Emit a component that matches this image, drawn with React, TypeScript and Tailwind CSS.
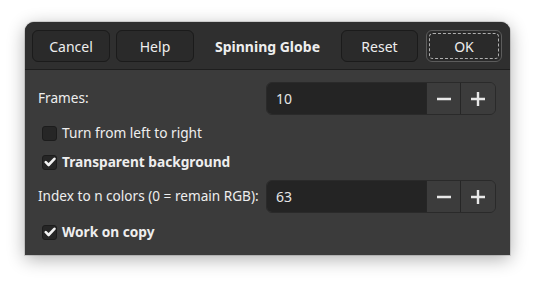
import React from "react";

const font = { fontFamily: '"Noto Sans", "DejaVu Sans", sans-serif' };

function HeaderButton({ label, w }: { label: string; w: string }) {
  return (
    <button
      className={`h-[32px] ${w} rounded-[6px] bg-[#2a2a2a] border border-[#1b1b1b] text-[#eeeeee] text-[14px] flex items-center justify-center`}
    >
      {label}
    </button>
  );
}

function Minus() {
  return (
    <svg width="16" height="16" viewBox="0 0 16 16">
      <line x1="1" y1="8" x2="15" y2="8" stroke="#e8e8e8" strokeWidth="2.4" />
    </svg>
  );
}

function Plus() {
  return (
    <svg width="16" height="16" viewBox="0 0 16 16">
      <line x1="1" y1="8" x2="15" y2="8" stroke="#e8e8e8" strokeWidth="2.4" />
      <line x1="8" y1="1" x2="8" y2="15" stroke="#e8e8e8" strokeWidth="2.4" />
    </svg>
  );
}

function SpinRow({ label, value, mt }: { label: string; value: string; mt: string }) {
  return (
    <div className={`flex items-center h-[33px] ${mt} pl-[13px] pr-[14px]`}>
      <div className="flex-1 text-[13.6px] text-[#eeeeee]">{label}</div>
      <div className="flex h-[33px] w-[230px] rounded-[6px] border border-[#2a2a2a] overflow-hidden">
        <div className="flex-1 bg-[#242424] flex items-center pl-[9px] text-[14px] text-[#e6e6e6]">
          {value}
        </div>
        <div className="w-[34px] bg-[#3c3c3c] border-l border-[#262626] flex items-center justify-center">
          <Minus />
        </div>
        <div className="w-[35px] bg-[#3c3c3c] border-l border-[#262626] flex items-center justify-center">
          <Plus />
        </div>
      </div>
    </div>
  );
}

function Check({ label, checked, bold, mt }: { label: string; checked: boolean; bold: boolean; mt: string }) {
  return (
    <div className={`flex items-center h-[28px] ${mt} pl-[17px]`}>
      <div className="w-[15px] h-[15px] rounded-[3px] bg-[#262626] border border-[#1c1c1c] flex items-center justify-center">
        {checked && (
          <svg width="12" height="12" viewBox="0 0 12 12">
            <path d="M1.8 6.2 L4.6 9 L10.4 2.8" fill="none" stroke="#f2f2f2" strokeWidth="2.6" strokeLinecap="round" strokeLinejoin="round" />
          </svg>
        )}
      </div>
      <span className={`ml-[5px] text-[13.7px] text-[#eeeeee] ${bold ? "font-bold" : ""}`}>{label}</span>
    </div>
  );
}

export default function App() {
  return (
    <div className="w-[535px] h-[284px] bg-white pl-[25px] pt-[22px]" style={font}>
      <div className="w-[485px] h-[233px] rounded-t-[9px] bg-[#3b3b3b] shadow-[0_4px_18px_rgba(0,0,0,0.32),0_0_0_1px_rgba(0,0,0,0.12)] flex flex-col overflow-hidden">
        <div className="h-[48px] bg-[#2f2f2f] border-b border-[#1e1e1e] flex items-center pl-[7px] pr-[8px] pt-[1px]">
          <HeaderButton label="Cancel" w="w-[78px]" />
          <div className="w-[6px]" />
          <HeaderButton label="Help" w="w-[78px]" />
          <div className="flex-1 text-center text-[14px] font-bold text-[#eeeeee]">Spinning Globe</div>
          <HeaderButton label="Reset" w="w-[77px]" />
          <div className="w-[8px]" />
          <button className="h-[32px] w-[76px] rounded-[6px] bg-[#2a2a2a] border border-[#5c5c5c] p-[2px] flex">
            <span className="flex-1 rounded-[4px] border border-dashed border-[#b0b0b0] flex items-center justify-center text-[#eeeeee] text-[14px]">
              OK
            </span>
          </button>
        </div>
        <SpinRow label="Frames:" value="10" mt="mt-[12px]" />
        <Check label="Turn from left to right" checked={false} bold={false} mt="mt-[4px]" />
        <Check label="Transparent background" checked={true} bold={true} mt="mt-[1px]" />
        <SpinRow label="Index to n colors (0 = remain RGB):" value="63" mt="mt-[4px]" />
        <Check label="Work on copy" checked={true} bold={true} mt="mt-[5px]" />
      </div>
    </div>
  );
}
